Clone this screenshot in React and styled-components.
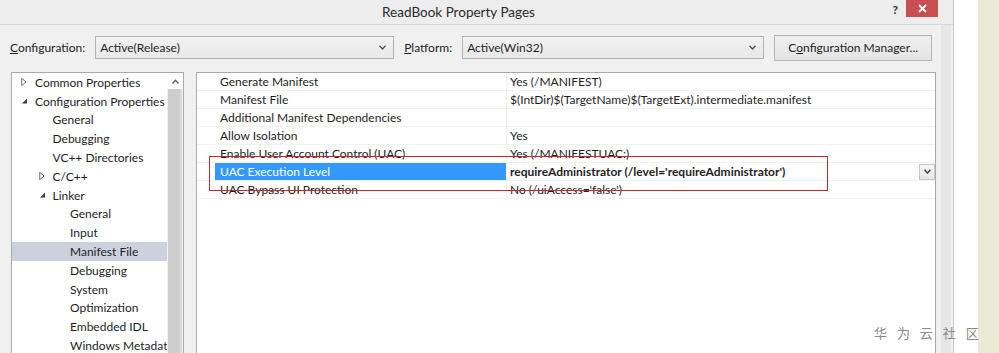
import React from 'react';
import styled, { createGlobalStyle } from 'styled-components';

const GlobalStyle = createGlobalStyle`
  html, body {
    margin: 0;
    padding: 0;
    background: #ffffff;
  }
  body {
    width: 999px;
    height: 353px;
    overflow: hidden;
    font-family: Lato, "Noto Sans", sans-serif;
    font-size: 12px;
    color: #1e1e1e;
  }
`;

const treeItems = [
  { label: 'Common Properties', level: 0, expander: 'closed' },
  { label: 'Configuration Properties', level: 0, expander: 'open' },
  { label: 'General', level: 1 },
  { label: 'Debugging', level: 1 },
  { label: 'VC++ Directories', level: 1 },
  { label: 'C/C++', level: 1, expander: 'closed' },
  { label: 'Linker', level: 1, expander: 'open' },
  { label: 'General', level: 2 },
  { label: 'Input', level: 2 },
  { label: 'Manifest File', level: 2, selected: true },
  { label: 'Debugging', level: 2 },
  { label: 'System', level: 2 },
  { label: 'Optimization', level: 2 },
  { label: 'Embedded IDL', level: 2 },
  { label: 'Windows Metadata', level: 2 },
];

const properties = [
  { name: 'Generate Manifest', value: 'Yes (/MANIFEST)' },
  { name: 'Manifest File', value: '$(IntDir)$(TargetName)$(TargetExt).intermediate.manifest' },
  { name: 'Additional Manifest Dependencies', value: '' },
  { name: 'Allow Isolation', value: 'Yes' },
  { name: 'Enable User Account Control (UAC)', value: 'Yes (/MANIFESTUAC:)' },
  { name: 'UAC Execution Level', value: "requireAdministrator (/level='requireAdministrator')", selected: true },
  { name: 'UAC Bypass UI Protection', value: "No (/uiAccess='false')" },
];

export default function App() {
  return (
    <>
      <GlobalStyle />
      <Page>
        <Dialog>
          <TitleBar>
            <Title>ReadBook Property Pages</Title>
            <TitleButtons>
              <HelpButton>?</HelpButton>
              <CloseButton>
                <svg width="9" height="9" viewBox="0 0 9 9">
                  <path d="M1 1 L8 8 M8 1 L1 8" stroke="#ffffff" strokeWidth="1.8" />
                </svg>
              </CloseButton>
            </TitleButtons>
          </TitleBar>
          <Content>
            <Toolbar>
              <Label>
                <u>C</u>onfiguration:
              </Label>
              <Combo $width={299}>
                <span>Active(Release)</span>
                <Chevron />
              </Combo>
              <Label $gap={10}>
                <u>P</u>latform:
              </Label>
              <Combo $width={302}>
                <span>Active(Win32)</span>
                <Chevron />
              </Combo>
              <Button>
                C<u>o</u>nfiguration Manager...
              </Button>
            </Toolbar>
            <Body>
              <TreePanel>
                <TreeList>
                  {treeItems.map((item, i) => (
                    <TreeRow key={i} $selected={item.selected}>
                      <TreeLabel $level={item.level}>
                        {item.expander && <Expander level={item.level} type={item.expander} />}
                        {item.label}
                      </TreeLabel>
                    </TreeRow>
                  ))}
                </TreeList>
                <ScrollBar>
                  <ScrollArrow>
                    <svg width="7" height="5" viewBox="0 0 7 5">
                      <path d="M0.5 4.5 L3.5 1.2 L6.5 4.5" fill="none" stroke="#606060" strokeWidth="1.3" />
                    </svg>
                  </ScrollArrow>
                  <ScrollThumb />
                </ScrollBar>
              </TreePanel>
              <GridPanel>
                {properties.map((p, i) => (
                  <GridRow key={i}>
                    <GridMargin />
                    <NameCell $selected={p.selected}>{p.name}</NameCell>
                    <ValueCell $bold={p.selected}>
                      <span>{p.value}</span>
                      {p.selected && (
                        <DropButton>
                          <svg width="7" height="5" viewBox="0 0 7 5">
                            <path d="M0.5 0.8 L3.5 4 L6.5 0.8" fill="none" stroke="#404040" strokeWidth="1.5" />
                          </svg>
                        </DropButton>
                      )}
                    </ValueCell>
                  </GridRow>
                ))}
                <Annotation />
              </GridPanel>
            </Body>
          </Content>
        </Dialog>
        <Gap />
        <Strip />
        <Watermark>华 为 云 社 区</Watermark>
      </Page>
    </>
  );
}

function Chevron() {
  return (
    <ChevronBox>
      <svg width="7" height="5" viewBox="0 0 7 5">
        <path d="M0.5 0.8 L3.5 4 L6.5 0.8" fill="none" stroke="#505050" strokeWidth="1.3" />
      </svg>
    </ChevronBox>
  );
}

function Expander({ type, level }) {
  return (
    <ExpanderBox $level={level}>
      {type === 'open' ? (
        <svg width="7" height="7" viewBox="0 0 7 7">
          <path d="M6 1 L6 6 L1 6 Z" fill="#3c3c3c" />
        </svg>
      ) : (
        <svg width="6" height="9" viewBox="0 0 6 9">
          <path d="M0.7 0.8 L5 4.5 L0.7 8.2 Z" fill="none" stroke="#707070" strokeWidth="1" />
        </svg>
      )}
    </ExpanderBox>
  );
}

const Page = styled.div`
  position: relative;
  display: flex;
  width: 999px;
  height: 353px;
  overflow: hidden;
`;

const Dialog = styled.div`
  display: flex;
  flex-direction: column;
  width: 953px;
  height: 353px;
  background: #f0f0f0;
  border-right: 1px solid #c9c9c9;
  overflow: hidden;
  flex-shrink: 0;
`;

const TitleBar = styled.div`
  position: relative;
  height: 24px;
  display: flex;
  align-items: center;
  justify-content: center;
  background: #ededed;
  border-bottom: 1px solid #d6d6d6;
  flex-shrink: 0;
`;

const Title = styled.div`
  font-size: 13.5px;
  color: #2a2a2a;
  margin-left: -36px;
`;

const TitleButtons = styled.div`
  position: absolute;
  top: 0;
  right: 15px;
  display: flex;
  align-items: flex-start;
`;

const HelpButton = styled.div`
  font-size: 12px;
  font-weight: bold;
  color: #303030;
  padding: 2px 8px 0 0;
`;

const CloseButton = styled.div`
  width: 32px;
  height: 17px;
  background: #c74f4f;
  display: flex;
  align-items: center;
  justify-content: center;
`;

const Content = styled.div`
  flex: 1;
  display: flex;
  flex-direction: column;
  min-height: 0;
  box-shadow: inset -2px 0 0 #f0f0f0, inset -12px 0 0 #e6e6e6;
`;

const Toolbar = styled.div`
  display: flex;
  align-items: center;
  height: 47px;
  padding: 0 0 2px 10px;
  box-sizing: border-box;
  flex-shrink: 0;
`;

const Label = styled.div`
  margin-left: ${(p) => p.$gap || 0}px;
  margin-right: 10px;
  color: #1e1e1e;
  white-space: nowrap;
`;

const Combo = styled.div`
  width: ${(p) => p.$width}px;
  height: 23px;
  box-sizing: border-box;
  border: 1px solid #b4b4b4;
  background: linear-gradient(#f2f2f2, #e8e8e8);
  display: flex;
  align-items: center;
  justify-content: space-between;
  padding: 0 0 0 4px;
  color: #1e1e1e;
`;

const ChevronBox = styled.div`
  width: 17px;
  display: flex;
  align-items: center;
  justify-content: center;
  padding-right: 2px;
`;

const Button = styled.div`
  margin-left: 10px;
  width: 158px;
  height: 26px;
  box-sizing: border-box;
  border: 1px solid #b4b4b4;
  background: linear-gradient(#f0f0f0, #e4e4e4);
  display: flex;
  align-items: center;
  justify-content: center;
  color: #1e1e1e;
`;

const Body = styled.div`
  display: flex;
  align-items: flex-start;
  padding-left: 11px;
  flex: 1;
  min-height: 0;
`;

const TreePanel = styled.div`
  display: flex;
  width: 173px;
  height: 300px;
  box-sizing: border-box;
  border: 1px solid #a9a9a9;
  background: #ffffff;
  flex-shrink: 0;
`;

const TreeList = styled.div`
  flex: 1;
  min-width: 0;
  overflow: hidden;
`;

const TreeRow = styled.div`
  height: 18.8px;
  display: flex;
  align-items: center;
  background: ${(p) => (p.$selected ? '#cdd1dd' : 'transparent')};
  white-space: nowrap;
`;

const TreeLabel = styled.div`
  position: relative;
  padding-left: ${(p) => 23 + p.$level * 17.5}px;
  color: #1e1e1e;
`;

const ExpanderBox = styled.span`
  position: absolute;
  left: ${(p) => 9 + (p.$level || 0) * 17.5}px;
  top: 50%;
  transform: translateY(-50%);
  display: flex;
`;

const ScrollBar = styled.div`
  width: 16px;
  display: flex;
  flex-direction: column;
  background: #f0f0f0;
  flex-shrink: 0;
`;

const ScrollArrow = styled.div`
  height: 16px;
  display: flex;
  align-items: center;
  justify-content: center;
  background: #ffffff;
`;

const ScrollThumb = styled.div`
  flex: 1;
  margin: 0 1px 0 1px;
  background: #cdcdcd;
  border-right: 2px solid #dadada;
`;

const GridPanel = styled.div`
  position: relative;
  margin-left: 12px;
  width: 740px;
  height: 300px;
  box-sizing: border-box;
  border: 1px solid #a9a9a9;
  background: #ffffff;
  flex-shrink: 0;
`;

const GridRow = styled.div`
  display: flex;
  height: 18px;
  box-sizing: border-box;
  border-bottom: 1px solid #f1f1f1;
`;

const GridMargin = styled.div`
  width: 18px;
  flex-shrink: 0;
`;

const NameCell = styled.div`
  width: 292px;
  flex-shrink: 0;
  box-sizing: border-box;
  padding-left: 5px;
  display: flex;
  align-items: center;
  background: ${(p) => (p.$selected ? '#3399ff' : 'transparent')};
  color: ${(p) => (p.$selected ? '#ffffff' : '#1e1e1e')};
  border-right: 1px solid #f1f1f1;
  white-space: nowrap;
`;

const ValueCell = styled.div`
  flex: 1;
  display: flex;
  align-items: center;
  justify-content: space-between;
  padding-left: 3px;
  font-weight: ${(p) => (p.$bold ? 'bold' : 'normal')};
  color: #1e1e1e;
  white-space: nowrap;
`;

const DropButton = styled.div`
  width: 16px;
  height: 16px;
  box-sizing: border-box;
  border: 1px solid #c8c8c8;
  background: linear-gradient(#f6f6f6, #e6e6e6);
  display: flex;
  align-items: center;
  justify-content: center;
`;

const Annotation = styled.div`
  position: absolute;
  left: 12px;
  top: 83px;
  width: 619px;
  height: 35px;
  box-sizing: border-box;
  border: 1px solid #c4262e;
  pointer-events: none;
`;

const Gap = styled.div`
  width: 24px;
  background: #ffffff;
  flex-shrink: 0;
`;

const Strip = styled.div`
  flex: 1;
  background: #e9ebd4;
`;

const Watermark = styled.div`
  position: absolute;
  left: 874px;
  top: 323px;
  font-family: "Noto Sans CJK SC", sans-serif;
  font-size: 13px;
  letter-spacing: 3.5px;
  color: #8a8a8a;
`;
